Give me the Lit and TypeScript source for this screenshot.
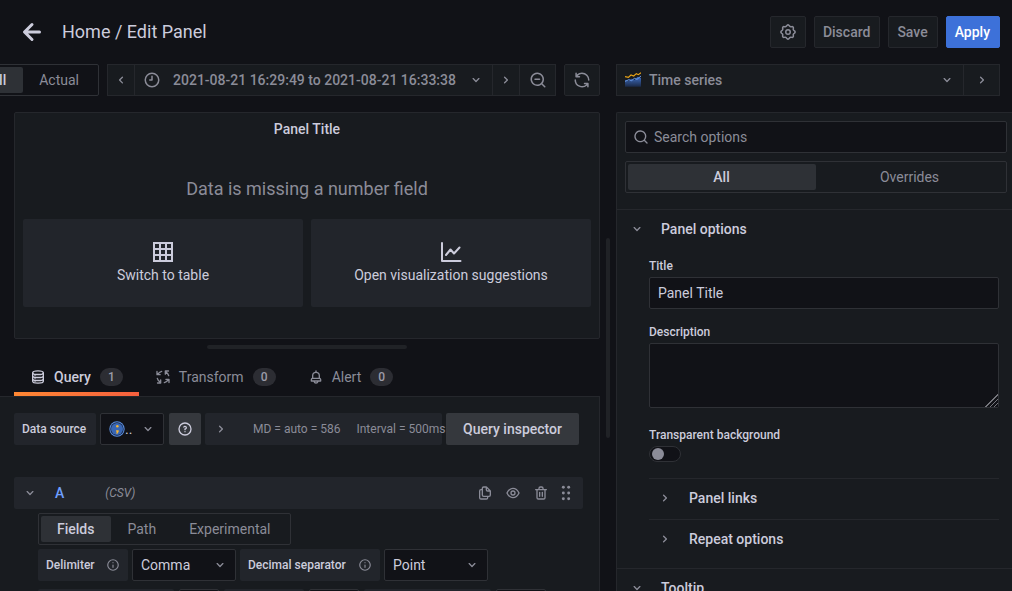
import { LitElement, html, css, svg } from "lit";
import { customElement, property } from "lit/decorators.js";

const gearOutline = (() => {
  const points: string[] = [];
  for (let i = 0; i < 96; i++) {
    const a = (i / 96) * Math.PI * 2;
    const r = 8.6 + 0.9 * Math.cos(a * 8);
    points.push(`${(12 + r * Math.cos(a)).toFixed(2)} ${(12 + r * Math.sin(a)).toFixed(2)}`);
  }
  return `M${points.join("L")}Z`;
})();

const ICONS: Record<string, unknown> = {
  "angle-down": svg`<path d="M17,9.17a1,1,0,0,0-1.41,0L12,12.71,8.46,9.17a1,1,0,0,0-1.41,0,1,1,0,0,0,0,1.42l4.24,4.24a1,1,0,0,0,1.42,0L17,10.59A1,1,0,0,0,17,9.17Z"/>`,
  "angle-right": svg`<path d="M14.83,11.29,10.59,7.05a1,1,0,0,0-1.42,0,1,1,0,0,0,0,1.41L12.71,12,9.17,15.54a1,1,0,0,0,0,1.41,1,1,0,0,0,.71.29,1,1,0,0,0,.71-.29l4.24-4.24A1,1,0,0,0,14.83,11.29Z"/>`,
  "angle-left": svg`<path d="M11.29,12l3.54-3.54a1,1,0,0,0,0-1.41,1,1,0,0,0-1.42,0L9.17,11.29a1,1,0,0,0,0,1.42L13.41,17a1,1,0,0,0,.71.29,1,1,0,0,0,.71-.29,1,1,0,0,0,0-1.41Z"/>`,
  "arrow-left": svg`<path d="M17,11H9.41l3.3-3.29a1,1,0,1,0-1.42-1.42l-5,5a1,1,0,0,0-.21.33,1,1,0,0,0,0,.76,1,1,0,0,0,.21.33l5,5a1,1,0,0,0,1.42,0,1,1,0,0,0,0-1.42L9.41,13H17a1,1,0,0,0,0-2Z"/>`,
  clock: svg`<g fill="none" stroke="currentColor" stroke-width="2" stroke-linecap="round" stroke-linejoin="round"><circle cx="12" cy="12" r="9"/><path d="M12 7v5H9"/></g>`,
  search: svg`<path d="M21.71,20.29,18,16.61A9,9,0,1,0,16.61,18l3.68,3.68a1,1,0,0,0,1.42,0A1,1,0,0,0,21.71,20.29ZM11,18a7,7,0,1,1,7-7A7,7,0,0,1,11,18Z"/>`,
  "search-minus": svg`<path d="M21.71,20.29,18,16.61A9,9,0,1,0,16.61,18l3.68,3.68a1,1,0,0,0,1.42,0A1,1,0,0,0,21.71,20.29ZM11,18a7,7,0,1,1,7-7A7,7,0,0,1,11,18ZM14,10H8a1,1,0,0,0,0,2h6a1,1,0,0,0,0-2Z"/>`,
  sync: svg`<path d="M19.91,15.51H15.38a1,1,0,0,0,0,2h2.4A8,8,0,0,1,4,12a1,1,0,0,0-2,0,10,10,0,0,0,16.88,7.23V21a1,1,0,0,0,2,0V16.5A1,1,0,0,0,19.91,15.51ZM12,2A10,10,0,0,0,5.12,4.77V3a1,1,0,0,0-2,0V7.5a1,1,0,0,0,1,1h4.5a1,1,0,0,0,0-2H6.22A8,8,0,0,1,20,12a1,1,0,0,0,2,0A10,10,0,0,0,12,2Z"/>`,
  cog: svg`<g fill="none" stroke="currentColor" stroke-width="2"><path d="${gearOutline}"/><circle cx="12" cy="12" r="3"/></g>`,
  question: svg`<path d="M11.29,15.29a1.58,1.58,0,0,0-.12.15.76.76,0,0,0-.09.18.64.64,0,0,0-.06.18,1.36,1.36,0,0,0,0,.2.84.84,0,0,0,.08.38.9.9,0,0,0,.54.54.94.94,0,0,0,.76,0,.9.9,0,0,0,.54-.54A1,1,0,0,0,13,16a1,1,0,0,0-.29-.71A1,1,0,0,0,11.29,15.29ZM12,2A10,10,0,1,0,22,12,10,10,0,0,0,12,2Zm0,18a8,8,0,1,1,8-8A8,8,0,0,1,12,20ZM12,7A3,3,0,0,0,9.4,8.5a1,1,0,1,0,1.73,1A1,1,0,0,1,12,9a1,1,0,0,1,0,2,1,1,0,0,0-1,1v1a1,1,0,0,0,2,0v-.18A3,3,0,0,0,12,7Z"/>`,
  info: svg`<g fill="none" stroke="currentColor" stroke-width="2" stroke-linecap="round"><circle cx="12" cy="12" r="9"/><path d="M12 12v4M12 8v.01"/></g>`,
  eye: svg`<path d="M21.92,11.6C19.9,6.91,16.1,4,12,4S4.1,6.91,2.08,11.6a1,1,0,0,0,0,.8C4.1,17.09,7.9,20,12,20s7.9-2.91,9.92-7.6A1,1,0,0,0,21.92,11.6ZM12,18c-3.17,0-6.17-2.29-7.9-6C5.83,8.29,8.83,6,12,6s6.17,2.29,7.9,6C18.17,15.71,15.17,18,12,18ZM12,8a4,4,0,1,0,4,4A4,4,0,0,0,12,8Zm0,6a2,2,0,1,1,2-2A2,2,0,0,1,12,14Z"/>`,
  trash: svg`<path d="M10,18a1,1,0,0,0,1-1V11a1,1,0,0,0-2,0v6A1,1,0,0,0,10,18ZM20,6H16V5a3,3,0,0,0-3-3H11A3,3,0,0,0,8,5V6H4A1,1,0,0,0,4,8H5V19a3,3,0,0,0,3,3h8a3,3,0,0,0,3-3V8h1a1,1,0,0,0,0-2ZM10,5a1,1,0,0,1,1-1h2a1,1,0,0,1,1,1V6H10Zm7,14a1,1,0,0,1-1,1H8a1,1,0,0,1-1-1V8H17Zm-3-1a1,1,0,0,0,1-1V11a1,1,0,0,0-2,0v6A1,1,0,0,0,14,18Z"/>`,
  copy: svg`<path d="M21,8.94a1.31,1.31,0,0,0-.06-.27l0-.09a1.07,1.07,0,0,0-.19-.28h0l-6-6h0a1.07,1.07,0,0,0-.28-.19.32.32,0,0,0-.09,0A.88.88,0,0,0,14.05,2H10A3,3,0,0,0,7,5V6H6A3,3,0,0,0,3,9V19a3,3,0,0,0,3,3h8a3,3,0,0,0,3-3V18h1a3,3,0,0,0,3-3V9S21,9,21,8.94ZM15,5.41,17.59,8H16a1,1,0,0,1-1-1ZM15,19a1,1,0,0,1-1,1H6a1,1,0,0,1-1-1V9A1,1,0,0,1,6,8H7v7a3,3,0,0,0,3,3h5Zm4-4a1,1,0,0,1-1,1H10a1,1,0,0,1-1-1V5a1,1,0,0,1,1-1h3V7a3,3,0,0,0,3,3h3Z"/>`,
  bell: svg`<path d="M18,13.18V10a6,6,0,0,0-5-5.91V3a1,1,0,0,0-2,0V4.09A6,6,0,0,0,6,10v3.18A3,3,0,0,0,4,16v2a1,1,0,0,0,1,1H8.14a4,4,0,0,0,7.72,0H19a1,1,0,0,0,1-1V16A3,3,0,0,0,18,13.18ZM8,10a4,4,0,0,1,8,0v3H8Zm4,10a2,2,0,0,1-1.72-1h3.44A2,2,0,0,1,12,20Zm6-3H6V16a1,1,0,0,1,1-1H17a1,1,0,0,1,1,1Z"/>`,
  dots: svg`<circle cx="8" cy="3.5" r="2.2"/><circle cx="16" cy="3.5" r="2.2"/><circle cx="8" cy="12" r="2.2"/><circle cx="16" cy="12" r="2.2"/><circle cx="8" cy="20.5" r="2.2"/><circle cx="16" cy="20.5" r="2.2"/>`,
  database: svg`<g fill="none" stroke="currentColor" stroke-width="2"><ellipse cx="12" cy="5.5" rx="8" ry="2.8"/><path d="M4 5.5v13c0 1.6 3.6 2.8 8 2.8s8-1.2 8-2.8v-13M4 10c0 1.600 3.600 2.800 8 2.800s8-1.200 8-2.800M4 14.500c0 1.600 3.600 2.800 8 2.800s8-1.200 8-2.800"/></g><circle cx="7.500" cy="10" r="1"/><circle cx="7.500" cy="14.500" r="1"/><circle cx="7.500" cy="18.500" r="1"/>`,
  process: svg`<g fill="none" stroke="currentColor" stroke-width="2" stroke-linecap="round" stroke-linejoin="round">${[0, 90, 180, 270].map(
    (turn) => svg`<path transform="rotate(${turn} 12 12)" d="M10 3.500A9 9 0 0 0 4.200 8M3 3.800V8.500H7.700"/>`
  )}</g>`,
  table: svg`<path fill-rule="evenodd" d="M2 2H22V22H2ZM4 4V8H8V4ZM10 4V8H14V4ZM16 4V8H20V4ZM4 10V14H8V10ZM10 10V14H14V10ZM16 10V14H20V10ZM4 16V20H8V16ZM10 16V20H14V16ZM16 16V20H20V16Z"/>`,
  chart: svg`<g fill="none" stroke="currentColor" stroke-width="2" stroke-linecap="round" stroke-linejoin="round"><path d="M3 3V21H21.500M7 15L11.500 9.500L15 13.500L20.500 7.500" /></g>`,
  timeseries: svg`<defs><linearGradient id="area" x1="0" y1="0" x2="0" y2="1"><stop offset="0" stop-color="#3f6fc4"/><stop offset="1" stop-color="#1b2a48"/></linearGradient></defs><path fill="url(#area)" d="M0 12L5 14L10 10L14 12L19 7L24 9V22H0Z"/><path fill="none" stroke="#6a9bea" stroke-width="1.500" d="M0 14L6 11.500L10 13L14 9.500L18 11L24 6"/><path fill="none" stroke="#e8a317" stroke-width="1.800" d="M0 7L5 8L9 4.500L13 6L17 2.500L20 4L24 1"/>`,
  csv: svg`<circle cx="12" cy="12" r="11.500" fill="#5b8fe0"/><circle cx="12" cy="12" r="10" fill="#14213c"/><circle cx="12" cy="12" r="9" fill="#3a67b4"/><circle cx="12.500" cy="8" r="1.900" fill="#f7b733"/><path fill="#f7b733" d="M10.700 14h3.800v2l-2 3h-1.700l.8-3h-.9z"/>`,
};

@customElement("ui-icon")
class UiIcon extends LitElement {
  @property() name = "";
  @property({ type: Number }) size = 16;
  static styles = css`
    :host { display: inline-flex; flex: none; }
    svg { display: block; fill: currentColor; }
  `;
  render() {
    return html`<svg width=${this.size} height=${this.size} viewBox="0 0 24 24" aria-hidden="true">${ICONS[this.name]}</svg>`;
  }
}

@customElement("radio-group")
class RadioGroup extends LitElement {
  @property({ type: Array }) options: string[] = [];
  @property() value = "";
  @property({ type: Boolean, reflect: true }) full = false;
  static styles = css`
    :host { display: inline-flex; box-sizing: border-box; height: 32px; flex: none; padding: 2px; border: 1px solid #2f3136; border-radius: 2px; font-size: 14px; color: #8b8c98; }
    :host([full]) { display: flex; }
    :host([full]) .item { flex: 1; }
    .item { display: flex; position: relative; }
    input { position: absolute; inset: 0; margin: 0; opacity: 0; }
    label { flex: 1; display: flex; align-items: center; justify-content: center; padding: 0 17px 0 16px; border-radius: 2px; white-space: nowrap; }
    input:checked + label { background: #2e3136; color: #ccccdc; font-weight: 500; }
  `;
  render() {
    return this.options.map(
      (o) => html`<div class="item">
        <input type="radio" name="choice" id=${o} .checked=${o === this.value} @change=${() => (this.value = o)} />
        <label for=${o}>${o}</label>
      </div>`
    );
  }
}

@customElement("app-root")
class AppRoot extends LitElement {
  static styles = css`
    * { box-sizing: border-box; }
    :host { display: flex; flex-direction: column; height: 100vh; overflow: hidden; background: #111217; color: #ccccdc; font: 400 14px/22px Roboto, "Liberation Sans", sans-serif; }
    button, input, select, textarea { font: inherit; color: inherit; margin: 0; border-radius: 2px; }
    button { cursor: pointer; padding: 0; border: 0; background: none; display: inline-flex; align-items: center; justify-content: center; white-space: nowrap; }
    h1, h2, p { margin: 0; font: inherit; }

    .header { display: flex; align-items: center; gap: 8px; height: 64px; flex: none; padding: 0 12px 0 14px; }
    .header h1 { flex: 1; font-size: 18px; padding-left: 4px; }
    .tool { flex: none; height: 32px; border: 1px solid #25272c; background: #181b1f; color: #8b8c98; font-weight: 500; padding: 0 9px 0 8px; }
    .tool.icon { width: 36px; padding: 0; }
    .tool.apply { background: #3d71d9; border-color: #3d71d9; color: #fff; }

    .body { flex: 1; min-height: 0; display: grid; grid-template-columns: minmax(0, 600px) 16px minmax(0, 1fr); }
    .left, .right { display: flex; flex-direction: column; min-width: 0; min-height: 0; }
    .bar { display: flex; gap: 8px; height: 32px; margin-bottom: 16px; flex: none; }
    .left .bar { justify-content: flex-end; overflow: hidden; }
    .right .bar { padding-right: 12px; }
    .joined { display: flex; flex: none; }
    .joined.wide { flex: 1; }
    .joined .tool { border-radius: 0; }
    .joined .tool + .tool { border-left: 0; }
    .joined .narrow { width: 27px; padding: 0; }
    .joined .narrow:first-child { width: 28px; }
    .joined .range { gap: 9px; min-width: 358px; padding: 0 8px; justify-content: space-between; }
    .joined .picker { flex: 1; justify-content: flex-start; gap: 8px; padding: 0 8px; }
    .picker span { flex: 1; text-align: left; }

    .panel { flex: 14 1 0; min-height: 0; margin-left: 14px; padding: 5px 8px 0; border: 1px solid #25272c; border-radius: 2px; background: #181b1f; text-align: center; overflow: hidden; }
    .panel h2 { font-weight: 500; }
    .missing { color: #8b8c98; font-size: 18px; padding: 38px 0 19px; }
    .cards { display: grid; grid-template-columns: 1fr 1fr; gap: 8px; }
    .card { height: 88px; background: #22252b; flex-direction: column; }
    .hsplit { height: 16px; flex: none; display: flex; align-items: center; justify-content: center; padding-left: 14px; }
    .hsplit i { width: 200px; height: 4px; background: #202226; border-radius: 2px; }
    .vsplit { display: flex; align-items: center; justify-content: center; padding-top: 21px; }
    .vsplit i { width: 4px; height: 200px; background: #202226; border-radius: 2px; }

    .editor { flex: 15 1 0; min-height: 0; display: flex; flex-direction: column; }
    .tabs { display: flex; height: 41px; flex: none; padding-left: 14px; }
    .tab { display: flex; gap: 8px; padding: 7px 16px 0; color: #8b8c98; border-radius: 0; border-bottom: 4px solid transparent; }
    .tab.active { color: #ccccdc; font-weight: 500; border-image: linear-gradient(270deg, #f55f3e 0%, #ff8833 100%) 1; border-width: 0 0 4px; border-style: solid; }
    .badge { min-width: 23px; height: 18px; margin-left: 1px; line-height: 18px; border-radius: 9px; background: #2c2d33; color: #9c9ca9; font-size: 12px; font-weight: 500; text-align: center; }
    .content { flex: 1; min-height: 0; overflow: hidden; border: 1px solid #25272c; border-width: 1px 1px 0 0; background: #181b1f; padding: 16px 16px 0 14px; }
    .row { display: flex; gap: 4px; }
    .tag { display: flex; align-items: center; justify-content: space-between; flex: none; height: 32px; padding: 0 8px; background: #22252b; border-radius: 2px; font-size: 12px; font-weight: 500; white-space: nowrap; }
    .tag ui-icon { color: #8b8c98; }
    .tag.small { width: 82px; }
    .tag.medium { width: 90px; }
    .tag.large { width: 140px; }
    .select { position: relative; display: flex; height: 32px; width: 104px; }
    .select select { appearance: none; flex: 1; min-width: 0; border: 1px solid #2f3136; background: #111217; padding: 0 24px 0 8px; }
    .select ui-icon { position: absolute; right: 8px; top: 8px; color: #8b8c98; pointer-events: none; }
    .select.source { width: 64px; }
    .select.source select { padding: 0 0 0 24px; }
    .select.source ui-icon.logo { left: 9px; right: auto; }
    .help { width: 32px; height: 32px; background: #35383d; margin-left: 1px; }
    .opts { flex: 1; width: 0; display: flex; align-items: center; justify-content: flex-start; gap: 16px; height: 32px; padding-left: 8px; background: #22252b; color: #8b8c98; font-size: 12px; }
    .opts ui-icon { padding-right: 8px; }
    .inspect { height: 32px; min-width: 133px; background: #35383d; font-weight: 500; margin-right: 4px; }
    .query { display: flex; align-items: center; height: 32px; margin: 32px 0 4px; padding: 0 9px 0 8px; background: #22252b; color: #8b8c98; border-radius: 2px; }
    .query b { font-weight: 500; color: #6e9fff; padding-left: 17px; }
    .query em { flex: 1; font-size: 12px; padding-left: 41px; }
    .actions { display: flex; gap: 12px; }
    .actions button:last-child { margin-left: -3px; }
    .indent { display: flex; flex-direction: column; align-items: flex-start; gap: 4px; padding-left: 24px; }
    .next { display: grid; grid-template-columns: 136px 40px 80px 50px 127px 50px; gap: 5px; padding-top: 4px; }
    .next i { height: 32px; background: #22252b; border-radius: 2px; }
    .next i:nth-child(even) { background: #111217; border: 1px solid #2f3136; }

    .options { flex: 1; min-height: 0; overflow: hidden; border: 1px solid #25272c; border-width: 1px 0 0 1px; border-radius: 2px 0 0 0; background: #181b1f; }
    .top { display: grid; gap: 8px; padding: 8px 5px 16px 8px; }
    .search { display: flex; align-items: center; gap: 5px; height: 32px; padding-left: 7px; border: 1px solid #2f3136; border-radius: 2px; background: #111217; color: #8b8c98; }
    .search input { flex: 1; min-width: 0; border: 0; padding: 0; background: none; outline: none; }
    .search input::placeholder { color: #8b8c98; opacity: 1; }
    .section { border-top: 1px solid #25272c; }
    .head { display: flex; justify-content: flex-start; gap: 16px; width: 100%; height: 38px; padding-left: 12px; font-weight: 500; }
    .head ui-icon { color: #8b8c98; }
    .fields { padding: 10px 13px 8px 32px; }
    .fields > label { display: block; font-size: 12px; font-weight: 500; line-height: 16px; margin-bottom: 3px; }
    .fields > input[type="text"], textarea { display: block; width: 100%; border: 1px solid #2f3136; background: #111217; padding: 0 8px; margin-bottom: 15px; }
    .fields > input[type="text"] { height: 32px; }
    .fields textarea { height: 65px; margin-bottom: 19px; resize: vertical; }
    textarea::-webkit-resizer { background: linear-gradient(135deg, #111217 50%, transparent 50%), repeating-linear-gradient(135deg, #75767c 0 1px, #111217 1px 3px); }
    .switch { appearance: none; display: block; width: 32px; height: 16px; padding: 1px 2px; border: 1px solid #2f3136; border-radius: 8px; background: #111217; margin-bottom: 16px; }
    .switch::before { content: ""; display: block; width: 12px; height: 12px; border-radius: 6px; background: #8b8c98; }
    .switch:checked::before { margin-left: auto; }
    .fields .section { padding-bottom: 2px; }
    .fields .head { padding-left: 8px; }
  `;

  private head(name: string, icon: string) {
    return html`<button class="head"><ui-icon name=${icon}></ui-icon>${name}</button>`;
  }

  private tab(label: string, icon: string, count: number, active = false) {
    return html`<button class="tab ${active ? "active" : ""}" role="tab" aria-selected=${active}>
      <ui-icon name=${icon}></ui-icon><span>${label}</span><span class="badge">${count}</span>
    </button>`;
  }

  private csvSelect(id: string, label: string, value: string, size: string) {
    return html`<label class="tag ${size}" for=${id}>${label}<ui-icon name="info" size="14"></ui-icon></label>
      <div class="select"><select id=${id}><option>${value}</option></select><ui-icon name="angle-down"></ui-icon></div>`;
  }

  render() {
    return html`
      <header class="header">
        <button aria-label="Back"><ui-icon name="arrow-left" size="36"></ui-icon></button>
        <h1>Home / Edit Panel</h1>
        <button class="tool icon" aria-label="Dashboard settings"><ui-icon name="cog" size="18"></ui-icon></button>
        <button class="tool">Discard</button>
        <button class="tool">Save</button>
        <button class="tool apply">Apply</button>
      </header>
      <main class="body">
        <div class="left">
          <div class="bar">
            <radio-group .options=${["Fill", "Actual"]} value="Fill"></radio-group>
            <div class="joined">
              <button class="tool narrow" aria-label="Earlier"><ui-icon name="angle-left"></ui-icon></button>
              <button class="tool range">
                <ui-icon name="clock" size="18"></ui-icon>2021-08-21 16:29:49 to 2021-08-21 16:33:38<ui-icon name="angle-down"></ui-icon>
              </button>
              <button class="tool narrow" aria-label="Later"><ui-icon name="angle-right"></ui-icon></button>
              <button class="tool icon" aria-label="Zoom out"><ui-icon name="search-minus" size="18"></ui-icon></button>
            </div>
            <button class="tool icon" aria-label="Refresh"><ui-icon name="sync" size="18"></ui-icon></button>
          </div>
          <section class="panel">
            <h2>Panel Title</h2>
            <p class="missing">Data is missing a number field</p>
            <div class="cards">
              <button class="card"><ui-icon name="table" size="24"></ui-icon>Switch to table</button>
              <button class="card"><ui-icon name="chart" size="24"></ui-icon>Open visualization suggestions</button>
            </div>
          </section>
          <div class="hsplit"><i></i></div>
          <section class="editor">
            <div class="tabs" role="tablist">
              ${this.tab("Query", "database", 1, true)}${this.tab("Transform", "process", 0)}${this.tab("Alert", "bell", 0)}
            </div>
            <div class="content">
              <div class="row">
                <label class="tag small" for="source">Data source</label>
                <div class="select source">
                  <select id="source"><option>..</option></select>
                  <ui-icon class="logo" name="csv"></ui-icon>
                  <ui-icon name="angle-down"></ui-icon>
                </div>
                <button class="help" aria-label="Help"><ui-icon name="question"></ui-icon></button>
                <button class="opts"><ui-icon name="angle-right"></ui-icon><span>MD = auto = 586</span><span>Interval = 500ms</span></button>
                <button class="inspect">Query inspector</button>
              </div>
              <div class="query">
                <ui-icon name="angle-down"></ui-icon><b>A</b><em>(CSV)</em>
                <div class="actions">
                  <button aria-label="Duplicate"><ui-icon name="copy"></ui-icon></button>
                  <button aria-label="Toggle visibility"><ui-icon name="eye"></ui-icon></button>
                  <button aria-label="Remove"><ui-icon name="trash"></ui-icon></button>
                  <button aria-label="Drag"><ui-icon name="dots"></ui-icon></button>
                </div>
              </div>
              <div class="indent">
                <radio-group .options=${["Fields", "Path", "Experimental"]} value="Fields"></radio-group>
                <div class="row">
                  ${this.csvSelect("delimiter", "Delimiter", "Comma", "medium")}${this.csvSelect("decimal", "Decimal separator", "Point", "large")}
                </div>
                <div class="next"><i></i><i></i><i></i><i></i><i></i><i></i></div>
              </div>
            </div>
          </section>
        </div>
        <div class="vsplit"><i></i></div>
        <aside class="right">
          <div class="bar">
            <div class="joined wide">
              <button class="tool picker"><ui-icon name="timeseries"></ui-icon><span>Time series</span><ui-icon name="angle-down"></ui-icon></button>
              <button class="tool icon" aria-label="Close options"><ui-icon name="angle-right"></ui-icon></button>
            </div>
          </div>
          <div class="options">
            <div class="top">
              <div class="search"><ui-icon name="search"></ui-icon><input type="text" aria-label="Search options" placeholder="Search options" /></div>
              <radio-group full .options=${["All", "Overrides"]} value="All"></radio-group>
            </div>
            <section class="section">
              ${this.head("Panel options", "angle-down")}
              <div class="fields">
                <label for="title">Title</label>
                <input id="title" type="text" value="Panel Title" />
                <label for="desc">Description</label>
                <textarea id="desc"></textarea>
                <label for="transparent">Transparent background</label>
                <input class="switch" id="transparent" type="checkbox" role="switch" />
                <div class="section">${this.head("Panel links", "angle-right")}</div>
                <div class="section">${this.head("Repeat options", "angle-right")}</div>
              </div>
            </section>
            <section class="section">${this.head("Tooltip", "angle-down")}</section>
          </div>
        </aside>
      </main>
    `;
  }
}
